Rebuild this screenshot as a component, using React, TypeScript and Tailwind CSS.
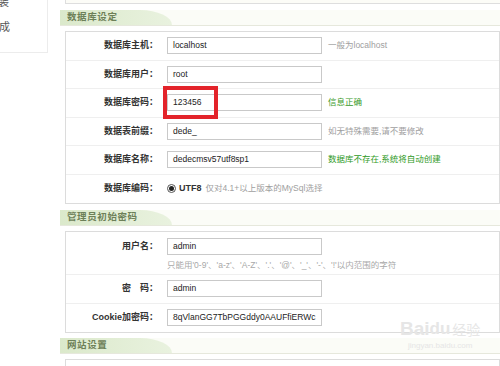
import React from "react";

const font = "[font-family:'Liberation_Sans','Noto_Sans_CJK_SC',sans-serif]";

function SectionHeader({ title, top = "mt-[6px]" }: { title: string; top?: string }) {
  return (
    <div className={`${top} flex h-[16px] border-b border-[#e6e8dc] bg-[#fbfcf7]`}>
      <div className="flex w-[112px] items-center bg-gradient-to-r from-[#dbe9cb] to-[#e9f2df] pl-[7px] text-[9.5px] font-bold tracking-[0.6px] text-[#6d8058] [border-top-right-radius:34px_16px]">
        {title}
      </div>
    </div>
  );
}

function Field({
  label,
  value,
  hint,
  hintClass = "text-[#a0a0a0]",
  tall = false,
  sub,
  last = false,
  highlight = false,
}: {
  label: string;
  value?: string;
  hint?: string;
  hintClass?: string;
  tall?: boolean;
  sub?: string;
  last?: boolean;
  highlight?: boolean;
}) {
  return (
    <div
      className={`flex ${tall ? "h-[43px] items-start pt-[6px]" : "h-[28.5px] items-center"} ${
        last ? "" : "border-b border-[#efefef]"
      }`}
    >
      <div className={`w-[101px] shrink-0 pr-[9px] text-right text-[9px] font-bold text-[#333] ${tall ? "leading-[17px]" : ""}`}>
        {label}
      </div>
      <div className="flex flex-col">
        <div className="flex items-center">
          <div className="relative">
            <div className="flex h-[17px] w-[155px] items-center overflow-hidden whitespace-nowrap border border-[#c9c9c9] bg-white pl-[5px] text-[8.5px] text-[#222]">
              {value}
            </div>
            {highlight && (
              <div className="absolute -left-[4px] -top-[8px] h-[33px] w-[55px] border-[4px] border-[#e3232a]" />
            )}
          </div>
          {hint && <span className={`ml-[6px] whitespace-nowrap text-[8.5px] ${hintClass}`}>{hint}</span>}
        </div>
        {sub && <div className="mt-[4px] whitespace-nowrap text-[8.5px] text-[#a8a8a8]">{sub}</div>}
      </div>
    </div>
  );
}

export default function App() {
  return (
    <div className={`relative flex h-[366px] w-[500px] overflow-hidden bg-white ${font}`}>
      <aside className="h-[53px] w-[48px] shrink-0 border-b border-r border-[#ececec] bg-white text-[11px] text-[#555]">
        <div className="-ml-[2px] -mt-[5px] leading-[14px]">装</div>
        <div className="-ml-[1px] mt-[11px] leading-[14px]">成</div>
      </aside>

      <main className="ml-[12px] flex-1">
        <div className="ml-[5px] h-[4px] border-b border-l border-[#dedede] bg-[#fcfcf7]" />

        <SectionHeader title="数据库设定" />
        <div className="ml-[5px] mt-[5px] border border-[#dcdcdc] bg-white">
          <Field label="数据库主机：" value="localhost" hint="一般为localhost" />
          <Field label="数据库用户：" value="root" />
          <Field label="数据库密码：" value="123456" hint="信息正确" hintClass="text-[#3a9a2a]" highlight />
          <Field label="数据表前缀：" value="dede_" hint="如无特殊需要,请不要修改" />
          <Field
            label="数据库名称："
            value="dedecmsv57utf8sp1"
            hint="数据库不存在,系统将自动创建"
            hintClass="text-[#2e9a1e]"
          />
          <div className="flex h-[28.5px] items-center">
            <div className="w-[101px] shrink-0 pr-[9px] text-right text-[9px] font-bold text-[#333]">数据库编码：</div>
            <span className="flex h-[9px] w-[9px] items-center justify-center rounded-full border border-[#555] bg-white">
              <span className="h-[5px] w-[5px] rounded-full bg-[#222]" />
            </span>
            <span className="ml-[3px] text-[9px] font-bold text-[#333]">UTF8</span>
            <span className="ml-[4px] whitespace-nowrap text-[8.5px] text-[#a0a0a0]">仅对4.1+以上版本的MySql选择</span>
          </div>
        </div>

        <SectionHeader title="管理员初始密码" />
        <div className="ml-[5px] mt-[5px] border border-[#dcdcdc] bg-white">
          <Field
            label="用户名："
            value="admin"
            tall
            sub="只能用'0-9'、'a-z'、'A-Z'、'.'、'@'、'_'、'-'、'!'以内范围的字符"
          />
          <Field label="密　码：" value="admin" />
          <Field label="Cookie加密码：" value="8qVlanGG7TbPGGddy0AAUFfiERWc" last />
        </div>

        <SectionHeader title="网站设置" top="mt-[5px]" />
        <div className="ml-[5px] mt-[5px] h-[20px] border border-[#dcdcdc] bg-white" />
      </main>

      <div className="pointer-events-none absolute left-[400px] top-[318px] flex flex-col items-center text-[#e6e6e6]">
        <div className="flex items-end">
          <span className="text-[19px] font-bold leading-[22px]">Bai</span>
          <span className="text-[17px] font-bold leading-[22px]">du</span>
          <span className="ml-[2px] text-[14px] leading-[20px]">经验</span>
        </div>
        <div className="text-[8px] leading-[12px]">jingyan.baidu.com</div>
      </div>
    </div>
  );
}
